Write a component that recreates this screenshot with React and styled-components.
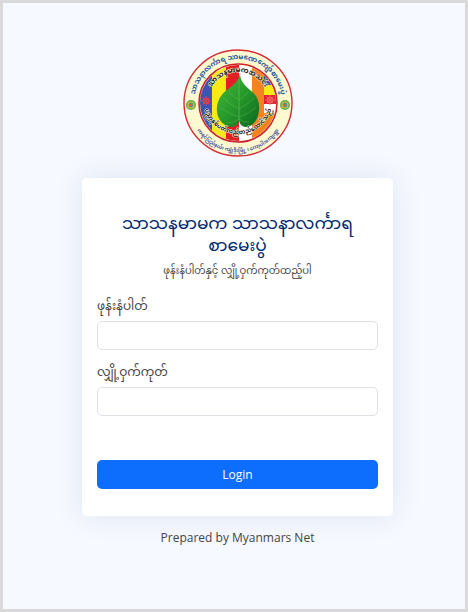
import React from "react";
import styled, { createGlobalStyle } from "styled-components";

const GlobalStyle = createGlobalStyle`
  * { box-sizing: border-box; }
  body {
    margin: 0;
    font-family: "Open Sans", "Noto Sans Myanmar", "Padauk", sans-serif;
    color: #444444;
  }
`;

const Page = styled.main`
  min-height: 100vh;
  display: flex;
  flex-direction: column;
  align-items: center;
  padding: 46px 72px 40px 79px;
  border: 3px solid #d9d9d9;
  background: #f6f9ff;
`;

const EmblemArt = styled.svg`
  width: 110px;
  height: 108px;
  flex: none;
  margin-bottom: 21px;
`;

const ArcText = styled.text`
  font-size: ${(p) => p.$size}px;
  font-weight: 700;
  fill: ${(p) => p.$color};
  stroke: ${(p) => p.$halo || "none"};
  stroke-width: 1px;
  stroke-linejoin: round;
  paint-order: stroke;
  text-anchor: middle;
`;

const Card = styled.form`
  width: 100%;
  max-width: 400px;
  display: flex;
  flex-direction: column;
  padding: 34px 15px 27px;
  border-radius: 5px;
  background: #ffffff;
  box-shadow: 0 0 30px rgba(1, 41, 112, 0.1);
`;

const Title = styled.h1`
  margin: 0;
  font-size: 17px;
  line-height: 22px;
  font-weight: 400;
  text-align: center;
  color: #012970;
`;

const Hint = styled.p`
  margin: 4px 0 16px;
  font-size: 10px;
  line-height: 20px;
  text-align: center;
`;

const Label = styled.label`
  margin-bottom: 5px;
  font-size: 12px;
  line-height: 20px;
`;

const Field = styled.input`
  width: 100%;
  height: 29px;
  margin-bottom: 12px;
  padding: 4px 10px;
  border: 1px solid #dee2e6;
  border-radius: 5px;
  font: inherit;
  font-size: 12px;
`;

const Submit = styled.button`
  height: 29px;
  margin-top: 32px;
  border: 0;
  border-radius: 5px;
  background: #0d6efd;
  color: #ffffff;
  font: inherit;
  font-size: 12px;
`;

const Credit = styled.p`
  margin: 12px 0 0;
  font-size: 12px;
  line-height: 20px;
`;

function Medallion({ x }) {
  return (
    <g transform={`translate(${x} 56)`}>
      <circle r="5" fill="#5fae4a" />
      <circle r="3.5" fill="#e6b93c" />
      <circle r="2.4" fill="#3f9c9a" />
      <circle r="1.3" fill="#e0622f" />
    </g>
  );
}

function Star({ x, y, color }) {
  return (
    <g transform={`translate(${x} ${y})`} stroke={color} strokeWidth="1" fill="none">
      <path d="M0-5V5M-5 0H5M-3.6-3.6L3.6 3.6M-3.6 3.6L3.6-3.6" />
      <circle r="3" />
    </g>
  );
}

function Emblem() {
  return (
    <EmblemArt viewBox="0 0 110 108" role="img" aria-label="သာသနာလင်္ကာရ">
      <defs>
        <clipPath id="disc"><circle cx="55" cy="54" r="38" /></clipPath>
        <linearGradient id="leaf" x1="0" y1="0" x2="1" y2="1">
          <stop offset="0" stopColor="#4bb83a" />
          <stop offset="0.5" stopColor="#279a2c" />
          <stop offset="1" stopColor="#0c6620" />
        </linearGradient>
        <path id="outerTop" d="M11 54A44 44 0 0 1 99 54" />
        <path id="innerTop" d="M24 54A31 31 0 0 1 86 54" />
        <path id="outerBottom" d="M6 54A49 49 0 0 0 104 54" />
        <path id="innerBottom" d="M20 50A35 35 0 0 0 90 50" />
      </defs>
      <ellipse cx="55" cy="54" rx="54" ry="53" fill="#fff9d2" stroke="#d52b35" strokeWidth="1.4" />
      <g clipPath="url(#disc)">
        <path fill="#3b55b5" d="M15 14h14v80H15z" />
        <path fill="#f9e915" d="M29 14h14v80H29z" />
        <path fill="#e51e25" d="M43 14h13v80H43z" />
        <path fill="#ffffff" d="M56 14h13v80H56z" />
        <path fill="#f58220" d="M69 14h12v80H69z" />
        <path fill="#3b55b5" d="M81 14h14v22H81z" />
        <path fill="#f9e915" d="M81 36h14v10H81z" />
        <path fill="#e51e35" d="M81 46h14v9H81z" />
        <path fill="#ffffff" d="M81 55h14v9H81z" />
        <path fill="#f58220" d="M81 64h14v30H81z" />
        <Star x={23} y={52} color="#ec3a4b" />
        <Star x={87} y={51} color="#f0655f" />
      </g>
      <circle cx="55" cy="54" r="39" fill="none" stroke="#c9242f" strokeWidth="1.6" />
      <path
        fill="url(#leaf)"
        d="M57 24C57 31 61 36 67 41C74 46 77 53 76 62C75 72 68 79 62 78C58 77 57 75 56 72C55 75 53 78 49 78C41 78 35 71 34 63C33 54 37 46 44 41C52 35 56 31 57 24Z"
      />
      <g fill="none" stroke="#6fc653" strokeWidth="0.5" strokeOpacity="0.7">
        <path d="M56 30V72" strokeWidth="0.8" />
        <path d="M56 68Q46 65 38 59M56 60Q48 56 40 49M56 51Q50 48 46 43M56 68Q66 65 73 58M56 60Q65 55 71 49M56 51Q62 47 65 43M56 70Q51 74 44 74M56 70Q61 74 66 73" />
      </g>
      <Medallion x={8} />
      <Medallion x={102} />
      <ArcText $size={7} $color="#2258a5">
        <textPath href="#outerTop" startOffset="50%">သာသနာလင်္ကာရ သာမဏေကျော်စာမေးပွဲ</textPath>
      </ArcText>
      <ArcText $size={7} $color="#171717" $halo="#fff8df">
        <textPath href="#innerTop" startOffset="50%">သာသနမာမကအသင်း</textPath>
      </ArcText>
      <ArcText $size={5} $color="#40519e">
        <textPath href="#outerBottom" startOffset="50%">ကရင်ပြည်နယ်၊ ကျုံဒိုးမြို့ ၊ ကော့ပါးကျေးရွာ</textPath>
      </ArcText>
      <ArcText $size={6} $color="#171717" $halo="#fff8df">
        <textPath href="#innerBottom" startOffset="50%">ပညာ့နှစ်ပတ်လည်တည်ထောင်သည်</textPath>
      </ArcText>
    </EmblemArt>
  );
}

export default function App() {
  return (
    <>
      <GlobalStyle />
      <Page>
        <Emblem />
        <Card>
          <Title>သာသနမာမက သာသနာလင်္ကာရ စာမေးပွဲ</Title>
          <Hint>ဖုန်းနံပါတ်နှင့် လျှို့ဝှက်ကုတ်ထည့်ပါ</Hint>
          <Label htmlFor="phone">ဖုန်းနံပါတ်</Label>
          <Field id="phone" type="text" />
          <Label htmlFor="code">လျှို့ဝှက်ကုတ်</Label>
          <Field id="code" type="password" />
          <Submit type="submit">Login</Submit>
        </Card>
        <Credit>Prepared by Myanmars Net</Credit>
      </Page>
    </>
  );
}
